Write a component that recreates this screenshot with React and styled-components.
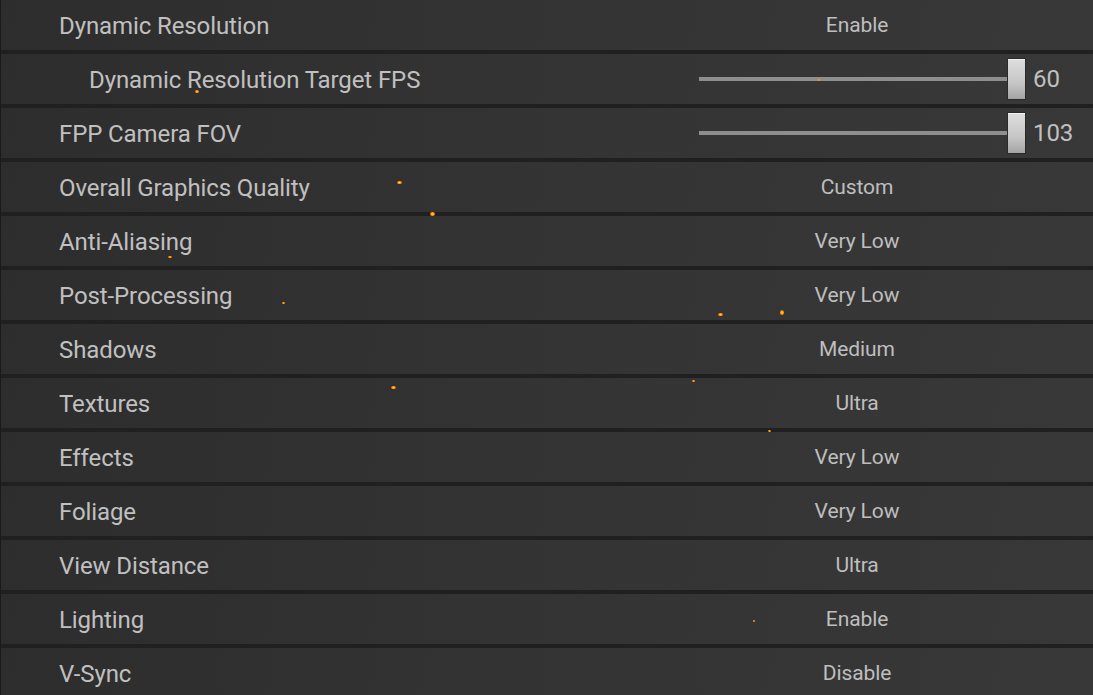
import React from 'react';
import styled, { createGlobalStyle } from 'styled-components';

const GlobalStyle = createGlobalStyle`
  html, body {
    margin: 0;
    padding: 0;
    background: #1f1f1f;
    overflow: hidden;
  }
  body {
    font-family: Roboto, "Liberation Sans", sans-serif;
  }
`;

const Panel = styled.div`
  position: relative;
  width: 1093px;
  height: 695px;
  overflow: hidden;
  background: #202020;
  border-left: 1px solid #1a1a1a;
  box-sizing: border-box;
  display: flex;
  flex-direction: column;
  gap: 4px;
`;

const Row = styled.div`
  flex: 0 0 50px;
  display: grid;
  grid-template-columns: ${({ $indent }) => ($indent ? '88px' : '58px')} 1fr 394px;
  align-items: center;
  background: linear-gradient(100deg, #2d2d2d 0%, #333333 45%, #393838 100%);
  color: #c0c0c0;
  font-size: 24px;
  letter-spacing: -0.1px;
`;

const Label = styled.div`
  grid-column: 2;
  white-space: nowrap;
  padding-top: 1px;
`;

const Value = styled.div`
  grid-column: 3;
  width: 316px;
  text-align: center;
  font-size: 21px;
  color: #bebebe;
`;

const SliderCell = styled.div`
  grid-column: 3;
  display: flex;
  align-items: center;
`;

const Track = styled.div`
  width: 310px;
  height: 4px;
  background: #8e8e8e;
`;

const Thumb = styled.div`
  width: 17px;
  height: 40px;
  margin-left: -2px;
  border: 1px solid #2a2a2a;
  border-radius: 1px;
  background: linear-gradient(180deg, #dedede 0%, #c6c6c6 60%, #a4a4a4 100%);
  box-shadow: inset 0 1px 0 #f2f2f2;
`;

const SliderValue = styled.span`
  margin-left: 7px;
  font-size: 24px;
  color: #c0c0c0;
`;

const Ember = styled.span`
  position: absolute;
  width: ${({ $w }) => $w}px;
  height: ${({ $h }) => $h}px;
  border-radius: 50%;
  background: radial-gradient(circle, #ffd23a 0%, #ff8a00 60%, #e04800 100%);
`;

const rows = [
  { label: 'Dynamic Resolution', value: 'Enable' },
  { label: 'Dynamic Resolution Target FPS', slider: '60', indent: true },
  { label: 'FPP Camera FOV', slider: '103' },
  { label: 'Overall Graphics Quality', value: 'Custom' },
  { label: 'Anti-Aliasing', value: 'Very Low' },
  { label: 'Post-Processing', value: 'Very Low' },
  { label: 'Shadows', value: 'Medium' },
  { label: 'Textures', value: 'Ultra' },
  { label: 'Effects', value: 'Very Low' },
  { label: 'Foliage', value: 'Very Low' },
  { label: 'View Distance', value: 'Ultra' },
  { label: 'Lighting', value: 'Enable' },
  { label: 'V-Sync', value: 'Disable' },
];

// drifting sparks over the menu
const embers = [
  [194, 90, 4, 3], [396, 181, 5, 3], [429, 212, 5, 4], [167, 256, 4, 2],
  [281, 302, 3, 2], [717, 313, 5, 3], [779, 310, 4, 5], [390, 386, 5, 3],
  [691, 380, 3, 2], [767, 430, 3, 2], [817, 79, 2, 2], [752, 620, 2, 2],
];

export default function App() {
  return (
    <>
      <GlobalStyle />
      <Panel>
        {rows.map((r) => (
          <Row key={r.label} $indent={r.indent}>
            <Label>{r.label}</Label>
            {r.slider ? (
              <SliderCell>
                <Track />
                <Thumb />
                <SliderValue>{r.slider}</SliderValue>
              </SliderCell>
            ) : (
              <Value>{r.value}</Value>
            )}
          </Row>
        ))}
        {embers.map(([x, y, w, h], i) => (
          <Ember key={i} $w={w} $h={h} style={{ left: x, top: y }} />
        ))}
      </Panel>
    </>
  );
}
